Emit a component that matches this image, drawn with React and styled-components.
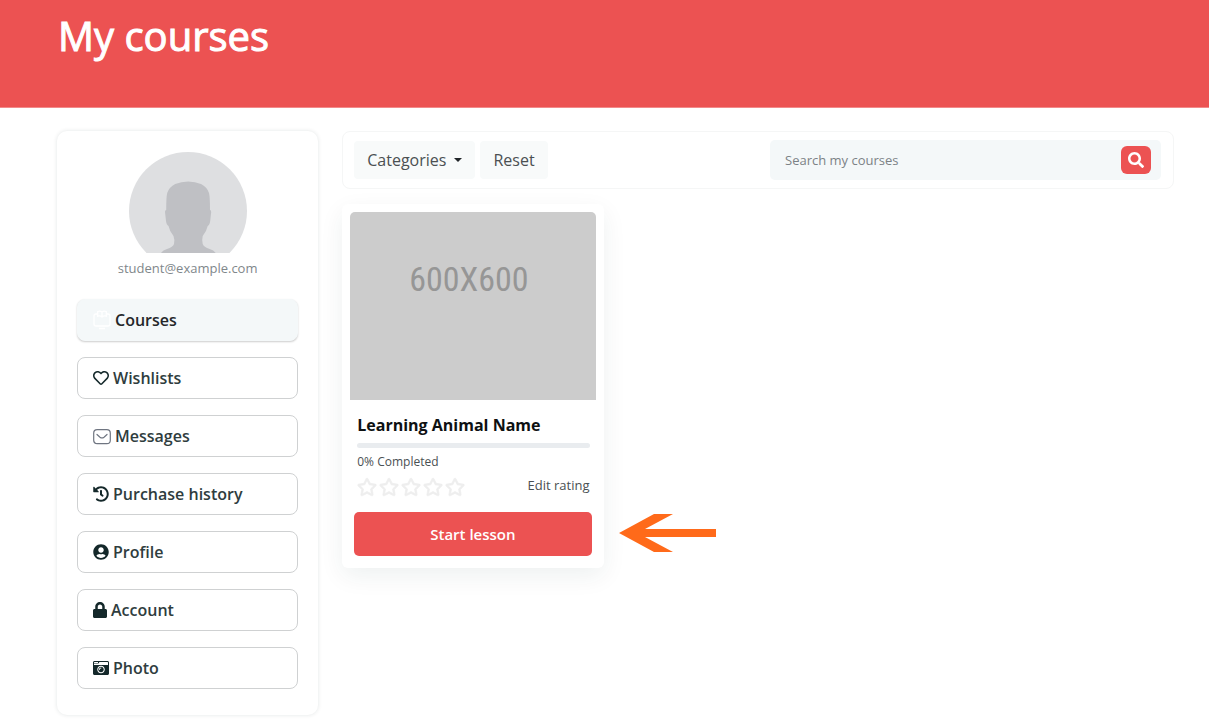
import React from "react";
import styled, { createGlobalStyle, css } from "styled-components";
import { FaRegHeart, FaHistory, FaUserCircle, FaLock, FaCameraRetro, FaRegStar, FaSearch } from "react-icons/fa";

const RED = "#ec5252";
const INK = "#2f3d3e";

const GlobalStyle = createGlobalStyle`
  *, *::before, *::after { box-sizing: border-box; }
  body {
    margin: 0;
    background: #fff;
    color: ${INK};
    font-family: "Open Sans", "Noto Sans", sans-serif;
    font-size: 16px;
    line-height: 24px;
  }
  button, input { font: inherit; }
`;

const Banner = styled.header`
  background: ${RED};
  padding: 12px 35px 47px 58px;
  border-bottom: 1px solid #f28a8a;
`;

const BannerTitle = styled.h1`
  margin: 0;
  color: #fff;
  font-size: 40px;
  line-height: 48px;
  font-weight: 500;
  -webkit-text-stroke: 1px #fff;
`;

const Page = styled.div`
  display: grid;
  grid-template-columns: repeat(12, minmax(0, 1fr));
  column-gap: 24px;
  align-items: start;
  padding: 23px 35px 8px 57px;
`;

const Sidebar = styled.aside`
  grid-column: span 3;
  padding: 21px 20px 26px;
  border-radius: 10px;
  box-shadow: 0 0 4px rgba(20, 40, 40, 0.12);
`;

const Avatar = styled.svg`
  display: block;
  width: 118px;
  height: 101px;
  margin: 0 auto;
`;

const Email = styled.p`
  margin: 5px 0 21px;
  color: #7f878b;
  font-size: 13px;
  line-height: 20px;
  text-align: center;
`;

const NavList = styled.nav`
  display: grid;
  gap: 16px;
`;

const NavLink = styled.a`
  display: flex;
  align-items: center;
  gap: 4px;
  height: 42px;
  padding: 0 15px;
  border: 1px solid #cfd1d2;
  border-radius: 8px;
  color: ${INK};
  font-weight: 600;
  text-decoration: none;

  svg { flex: none; color: #14282a; }

  ${(p) => p.$active && css`
    border-color: #f4f8f9;
    background: #f4f8f9;
    color: #24272a;
    box-shadow: 0 1px 2px rgba(0, 0, 0, 0.2);
  `}
`;

const LockIcon = styled(FaLock)`
  width: 14px;
`;

const Main = styled.main`
  grid-column: span 9;
`;

const Toolbar = styled.div`
  display: flex;
  align-items: center;
  gap: 5px;
  height: 58px;
  padding: 0 12px 0 11px;
  border: 1px solid #f5f6f6;
  border-radius: 8px;
`;

const FilterButton = styled.button`
  display: flex;
  align-items: center;
  gap: 8px;
  height: 38px;
  padding: 0 13px;
  border: 0;
  border-radius: 4px;
  background: #f8fafa;
  color: #4b5052;
`;

const Caret = styled.span`
  border: 4px solid transparent;
  border-top-color: #212529;
  border-bottom: 0;
`;

const SearchBox = styled.form`
  display: flex;
  align-items: center;
  width: 391px;
  max-width: 60%;
  height: 40px;
  margin-left: auto;
  padding: 0 10px 0 15px;
  border-radius: 5px;
  background: #f4f8f9;
`;

const SearchInput = styled.input`
  flex: 1;
  min-width: 0;
  padding: 0;
  border: 0;
  outline: 0;
  background: transparent;
  font-size: 13px;
  &::placeholder { color: #7c8286; opacity: 1; }
`;

const SearchButton = styled.button`
  display: grid;
  place-items: center;
  width: 30px;
  height: 28px;
  padding: 0;
  border: 0;
  border-radius: 6px;
  background: ${RED};
  color: #fff;
`;

const CourseGrid = styled.div`
  display: grid;
  grid-template-columns: repeat(3, minmax(0, 1fr));
  gap: 24px;
  margin-top: 15px;
`;

const Card = styled.article`
  position: relative;
  padding: 8px 8px 12px;
  border-radius: 6px;
  background: #fff;
  box-shadow: 0 8px 24px rgba(20, 60, 50, 0.07);
`;

const Thumb = styled.div`
  height: 188px;
  padding: 46px 8px 0 0;
  border-radius: 5px 5px 0 0;
  background: #ccc;
  color: #969696;
  font-family: "Roboto Condensed", "Liberation Sans", sans-serif;
  font-size: 34px;
  line-height: 42px;
  text-align: center;
`;

const CardBody = styled.div`
  padding: 13px 6px 0 7px;
`;

const CardTitle = styled.h2`
  margin: 0;
  color: #0e1112;
  font-size: 16px;
  line-height: 24px;
  font-weight: 700;
`;

const Progress = styled.div`
  height: 5px;
  margin-top: 6px;
  border-radius: 3px;
  background: #e9ecef;
`;

const Completed = styled.p`
  margin: 5px 0 0;
  color: #4a5053;
  font-size: 12px;
  line-height: 18px;
`;

const RatingRow = styled.div`
  display: flex;
  justify-content: space-between;
  align-items: flex-start;
  margin-top: 4px;
`;

const Stars = styled.div`
  display: flex;
  gap: 2px;
  padding: 2px 0 1px;
  color: #eeeeee;

  svg { stroke: #eeeeee; stroke-width: 18px; overflow: visible; }
`;

const EditLink = styled.a`
  color: #4a5053;
  font-size: 13px;
  line-height: 20px;
  text-decoration: none;
`;

const StartButton = styled.button`
  display: block;
  width: calc(100% - 8px);
  height: 44px;
  margin: 14px 4px 0;
  padding: 0;
  border: 0;
  border-radius: 5px;
  background: ${RED};
  color: #fff;
  font-size: 15px;
  font-weight: 600;
`;

const Pointer = styled.svg`
  position: absolute;
  left: calc(100% + 15px);
  bottom: 16px;
  width: 98px;
  height: 38px;
`;

const CourseIcon = () => (
  <svg width="18" height="20" viewBox="0 0 18 20" fill="none" stroke="#fff" strokeWidth="1.3">
    <path d="M4.500 4H3a2 2 0 0 0-2 2v8a2 2 0 0 0 2 2h12a2 2 0 0 0 2-2V6a2 2 0 0 0-2-2h-1.500M9 2Q7 .5 4.700 1.600v4.600Q7 5.300 9 7q2-1.700 4.300-.8V1.600Q11 .5 9 2v5M6 18.500h6" />
  </svg>
);

const MailIcon = () => (
  <svg width="18" height="18" viewBox="0 0 18 18" fill="none" stroke="#6f7581" strokeWidth="1.200" strokeLinecap="round">
    <rect x=".7" y="2.700" width="16.600" height="14" rx="3.500" />
    <path d="M4 7.500l3 2.700q2 1.500 4 0l3-2.700" />
  </svg>
);

const NAV = [
  { label: "Courses", icon: <CourseIcon />, active: true },
  { label: "Wishlists", icon: <FaRegHeart /> },
  { label: "Messages", icon: <MailIcon /> },
  { label: "Purchase history", icon: <FaHistory /> },
  { label: "Profile", icon: <FaUserCircle /> },
  { label: "Account", icon: <LockIcon /> },
  { label: "Photo", icon: <FaCameraRetro /> },
];

export default function App() {
  return (
    <>
      <GlobalStyle />
      <Banner>
        <BannerTitle>My courses</BannerTitle>
      </Banner>
      <Page>
        <Sidebar>
          <Avatar viewBox="0 0 118 101" role="img" aria-label="Student avatar">
            <circle cx="59" cy="59" r="59" fill="#dedfe1" />
            <path
              fill="#bfc0c4"
              d="M32 101q2-3 6-4 6-2 7-5 1-4-.5-8-4-5-5-10-2-1-2.500-5l-1-9q0-2 1.200-2 0-13 1-17 2-6 8-9 6-2.500 13-2.500T72 32q6 3 8 9 1 4 1 17 1.200 0 1.200 2l-1 9q-.5 4-2.500 5-1 5-5 10-1 4 0 8 1 3 7 5 4 1 6 4z"
            />
          </Avatar>
          <Email>student@example.com</Email>
          <NavList aria-label="Account">
            {NAV.map((item) => (
              <NavLink key={item.label} href="#" $active={item.active} aria-current={item.active ? "page" : undefined}>
                {item.icon}
                {item.label}
              </NavLink>
            ))}
          </NavList>
        </Sidebar>
        <Main>
          <Toolbar>
            <FilterButton type="button">
              Categories
              <Caret />
            </FilterButton>
            <FilterButton type="button">Reset</FilterButton>
            <SearchBox role="search">
              <SearchInput type="text" placeholder="Search my courses" aria-label="Search my courses" />
              <SearchButton type="button" aria-label="Search">
                <FaSearch size={16} />
              </SearchButton>
            </SearchBox>
          </Toolbar>
          <CourseGrid>
            <Card>
              <Thumb>600X600</Thumb>
              <CardBody>
                <CardTitle>Learning Animal Name</CardTitle>
                <Progress role="progressbar" aria-label="Course progress" aria-valuenow={0} />
                <Completed>0% Completed</Completed>
                <RatingRow>
                  <Stars>
                    {[1, 2, 3, 4, 5].map((n) => (
                      <FaRegStar key={n} size={20} />
                    ))}
                  </Stars>
                  <EditLink href="#">Edit rating</EditLink>
                </RatingRow>
              </CardBody>
              <StartButton type="button">Start lesson</StartButton>
              <Pointer viewBox="0 0 98 38" aria-hidden="true">
                <path fill="#ff6a1a" d="M0 19 35 0h19L26 15h71v8H26l28 15H35z" />
              </Pointer>
            </Card>
          </CourseGrid>
        </Main>
      </Page>
    </>
  );
}
